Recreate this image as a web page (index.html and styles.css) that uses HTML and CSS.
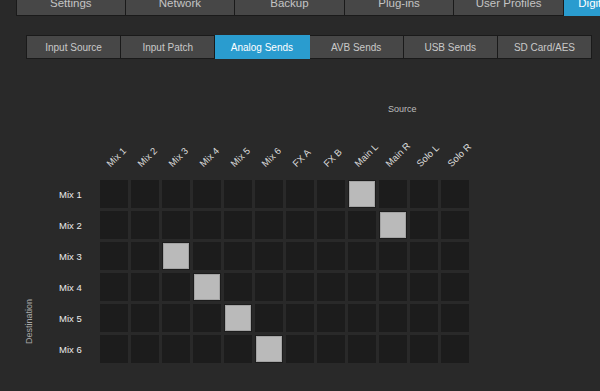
FILE: index.html
```html
<!DOCTYPE html>
<html>
<head>
<meta charset="utf-8">
<link rel="stylesheet" href="styles.css">
</head>
<body>
<nav class="topnav">
  <div class="ttab">Settings</div>
  <div class="ttab">Network</div>
  <div class="ttab">Backup</div>
  <div class="ttab">Plug-ins</div>
  <div class="ttab">User Profiles</div>
  <div class="ttab active">Digital Patching</div>
</nav>
<nav class="subnav">
  <div class="stab">Input Source</div>
  <div class="stab">Input Patch</div>
  <div class="stab active">Analog Sends</div>
  <div class="stab">AVB Sends</div>
  <div class="stab">USB Sends</div>
  <div class="stab">SD Card/AES</div>
</nav>
<section class="routing">
  <div class="source">Source</div>
  <div class="matrix">
    <div class="dest"><span>Destination</span></div>
    <div class="grid">
      <div class="corner"></div>
      <div class="col"><span>Mix 1</span></div>
      <div class="col"><span>Mix 2</span></div>
      <div class="col"><span>Mix 3</span></div>
      <div class="col"><span>Mix 4</span></div>
      <div class="col"><span>Mix 5</span></div>
      <div class="col"><span>Mix 6</span></div>
      <div class="col"><span>FX A</span></div>
      <div class="col"><span>FX B</span></div>
      <div class="col"><span>Main L</span></div>
      <div class="col"><span>Main R</span></div>
      <div class="col"><span>Solo L</span></div>
      <div class="col"><span>Solo R</span></div>

      <div class="row">Mix 1</div>
      <div class="cell"></div><div class="cell"></div><div class="cell"></div><div class="cell"></div><div class="cell"></div><div class="cell"></div><div class="cell"></div><div class="cell"></div><div class="cell on"></div><div class="cell"></div><div class="cell"></div><div class="cell"></div>

      <div class="row">Mix 2</div>
      <div class="cell"></div><div class="cell"></div><div class="cell"></div><div class="cell"></div><div class="cell"></div><div class="cell"></div><div class="cell"></div><div class="cell"></div><div class="cell"></div><div class="cell on"></div><div class="cell"></div><div class="cell"></div>

      <div class="row">Mix 3</div>
      <div class="cell"></div><div class="cell"></div><div class="cell on"></div><div class="cell"></div><div class="cell"></div><div class="cell"></div><div class="cell"></div><div class="cell"></div><div class="cell"></div><div class="cell"></div><div class="cell"></div><div class="cell"></div>

      <div class="row">Mix 4</div>
      <div class="cell"></div><div class="cell"></div><div class="cell"></div><div class="cell on"></div><div class="cell"></div><div class="cell"></div><div class="cell"></div><div class="cell"></div><div class="cell"></div><div class="cell"></div><div class="cell"></div><div class="cell"></div>

      <div class="row">Mix 5</div>
      <div class="cell"></div><div class="cell"></div><div class="cell"></div><div class="cell"></div><div class="cell on"></div><div class="cell"></div><div class="cell"></div><div class="cell"></div><div class="cell"></div><div class="cell"></div><div class="cell"></div><div class="cell"></div>

      <div class="row">Mix 6</div>
      <div class="cell"></div><div class="cell"></div><div class="cell"></div><div class="cell"></div><div class="cell"></div><div class="cell on"></div><div class="cell"></div><div class="cell"></div><div class="cell"></div><div class="cell"></div><div class="cell"></div><div class="cell"></div>
    </div>
  </div>
</section>
</body>
</html>
```
FILE: styles.css
```css
html, body {
  margin: 0;
  padding: 0;
  background: #292929;
  overflow: hidden;
  width: 600px;
  height: 391px;
  font-family: "Liberation Sans", Arial, sans-serif;
}

.topnav {
  display: flex;
  margin-top: -10px;
  padding-left: 16px;
  height: 26px;
  white-space: nowrap;
}

.ttab {
  flex: 0 0 109.6px;
  box-sizing: border-box;
  background: #474747;
  border: 1px solid #1a1a1a;
  border-left: none;
  color: #c4c4c4;
  font-size: 11.5px;
  display: flex;
  align-items: center;
  justify-content: center;
  overflow: hidden;
}

.ttab:first-child {
  border-left: 1px solid #1a1a1a;
}

.ttab.active {
  background: #2a9ccf;
  color: #ffffff;
  border-color: #2a9ccf;
}

.subnav {
  display: flex;
  margin: 19px 0 0 26px;
  width: 566px;
  height: 24px;
}

.stab {
  flex: 1 1 0;
  box-sizing: border-box;
  background: #474747;
  border: 1px solid #1a1a1a;
  border-left: none;
  color: #c9c9c9;
  font-size: 10px;
  display: flex;
  align-items: center;
  justify-content: center;
}

.stab:first-child {
  border-left: 1px solid #1a1a1a;
}

.stab.active {
  background: #2a9ccf;
  color: #ffffff;
  border-color: #2a9ccf;
}

.routing {
  margin-top: 44px;
}

.source {
  padding-left: 388px;
  height: 12px;
  line-height: 12px;
  font-size: 9px;
  color: #bdbdbd;
}

.matrix {
  display: flex;
  padding-left: 24px;
}

.dest {
  width: 35px;
  display: flex;
  align-items: flex-end;
  padding-bottom: 19px;
  box-sizing: border-box;
}

.dest span {
  writing-mode: vertical-rl;
  transform: rotate(180deg);
  font-size: 9px;
  color: #a9a9a9;
}

.grid {
  display: grid;
  grid-template-columns: 38px repeat(12, 28px);
  grid-template-rows: 62px repeat(6, 28px);
  gap: 3px;
}

.col {
  display: flex;
  align-items: flex-end;
  padding: 0 0 8px 12px;
  box-sizing: border-box;
}

.col span {
  display: block;
  white-space: nowrap;
  font-size: 9.5px;
  line-height: 11px;
  color: #dcdcdc;
  transform-origin: 0 100%;
  transform: rotate(-45deg);
}

.row {
  display: flex;
  align-items: center;
  font-size: 9.5px;
  color: #ececec;
}

.cell {
  background: #1c1c1c;
}

.cell.on {
  background: #bababa;
  box-shadow: inset 0 0 0 1px #1c1c1c, inset 0 0 0 2px #a3a3a3;
}
```
